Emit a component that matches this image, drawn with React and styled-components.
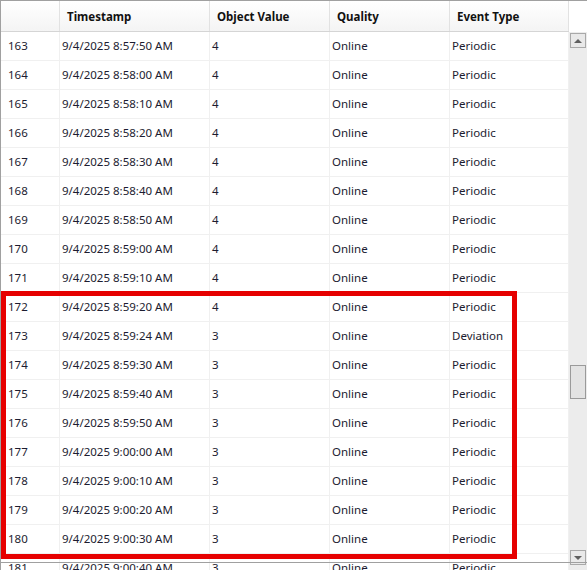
import React from 'react';
import styled, { createGlobalStyle } from 'styled-components';

const GlobalStyle = createGlobalStyle`
  html, body {
    margin: 0;
    padding: 0;
    background: #ffffff;
    overflow: hidden;
  }
  body {
    font-family: "Noto Sans", "Open Sans", Arial, sans-serif;
  }
`;

const rows = [
  [163, '9/4/2025 8:57:50 AM', 4, 'Online', 'Periodic'],
  [164, '9/4/2025 8:58:00 AM', 4, 'Online', 'Periodic'],
  [165, '9/4/2025 8:58:10 AM', 4, 'Online', 'Periodic'],
  [166, '9/4/2025 8:58:20 AM', 4, 'Online', 'Periodic'],
  [167, '9/4/2025 8:58:30 AM', 4, 'Online', 'Periodic'],
  [168, '9/4/2025 8:58:40 AM', 4, 'Online', 'Periodic'],
  [169, '9/4/2025 8:58:50 AM', 4, 'Online', 'Periodic'],
  [170, '9/4/2025 8:59:00 AM', 4, 'Online', 'Periodic'],
  [171, '9/4/2025 8:59:10 AM', 4, 'Online', 'Periodic'],
  [172, '9/4/2025 8:59:20 AM', 4, 'Online', 'Periodic'],
  [173, '9/4/2025 8:59:24 AM', 3, 'Online', 'Deviation'],
  [174, '9/4/2025 8:59:30 AM', 3, 'Online', 'Periodic'],
  [175, '9/4/2025 8:59:40 AM', 3, 'Online', 'Periodic'],
  [176, '9/4/2025 8:59:50 AM', 3, 'Online', 'Periodic'],
  [177, '9/4/2025 9:00:00 AM', 3, 'Online', 'Periodic'],
  [178, '9/4/2025 9:00:10 AM', 3, 'Online', 'Periodic'],
  [179, '9/4/2025 9:00:20 AM', 3, 'Online', 'Periodic'],
  [180, '9/4/2025 9:00:30 AM', 3, 'Online', 'Periodic'],
  [181, '9/4/2025 9:00:40 AM', 3, 'Online', 'Periodic'],
];

const columns = ['', 'Timestamp', 'Object Value', 'Quality', 'Event Type'];

export default function App() {
  return (
    <>
      <GlobalStyle />
      <Frame>
        <Table>
          <HeaderRow>
            {columns.map((c, i) => (
              <HeaderCell key={i}>{c}</HeaderCell>
            ))}
          </HeaderRow>
          {rows.map(r => (
            <Row key={r[0]}>
              {r.map((v, i) => (
                <Cell key={i} first={i === 0}>{v}</Cell>
              ))}
            </Row>
          ))}
        </Table>
        <ScrollBar>
          <ScrollCorner />
          <ScrollTrack>
            <ArrowButton>
              <ArrowUp />
            </ArrowButton>
            <Thumb />
            <ArrowButton down>
              <ArrowDown />
            </ArrowButton>
          </ScrollTrack>
        </ScrollBar>
        <BottomEdge />
        <Highlight />
      </Frame>
    </>
  );
}

// Styles

const Frame = styled.div`
  position: relative;
  display: flex;
  width: 587px;
  height: 570px;
  overflow: hidden;
  border-top: 1px solid #a0a0a0;
  border-left: 1px solid #a0a0a0;
  box-sizing: border-box;
`;

const Table = styled.div`
  width: 568px;
  flex: none;
`;

const HeaderRow = styled.div`
  display: grid;
  grid-template-columns: 59px 150px 120px 120px 119px;
  height: 30px;
  border-bottom: 1px solid #d5d5d5;
  background: linear-gradient(#ffffff, #f4f4f4);
`;

const HeaderCell = styled.div`
  display: flex;
  align-items: center;
  padding-left: 7px;
  padding-top: 1px;
  border-right: 1px solid #e2e2e2;
  font-size: 11.5px;
  font-weight: 700;
  color: #111111;
  white-space: nowrap;
`;

const Row = styled.div`
  display: grid;
  grid-template-columns: 59px 150px 120px 120px 119px;
  height: 28px;
  border-bottom: 1px solid #f0f0f0;
`;

const Cell = styled.div`
  display: flex;
  align-items: center;
  padding-left: ${p => (p.first ? '7px' : '2px')};
  padding-bottom: 2px;
  border-right: 1px solid #f0f0f0;
  font-size: 11.5px;
  color: #1c1c30;
  white-space: nowrap;
`;

const ScrollBar = styled.div`
  width: 18px;
  flex: none;
  display: flex;
  flex-direction: column;
`;

const ScrollCorner = styled.div`
  height: 31px;
  background: #ffffff;
`;

const ScrollTrack = styled.div`
  flex: 1;
  display: flex;
  flex-direction: column;
  align-items: flex-start;
  background: #ececec;
  padding-left: 1px;
`;

const ArrowButton = styled.div`
  width: 16px;
  height: 15px;
  box-sizing: border-box;
  border: 1px solid #a9a9a9;
  background: #e9e9e9;
  display: flex;
  align-items: center;
  justify-content: center;
  margin-top: ${p => (p.down ? '151px' : '1px')};
`;

const ArrowUp = styled.div`
  width: 0;
  height: 0;
  border-left: 4px solid transparent;
  border-right: 4px solid transparent;
  border-bottom: 4px solid #606060;
`;

const ArrowDown = styled.div`
  width: 0;
  height: 0;
  border-left: 4px solid transparent;
  border-right: 4px solid transparent;
  border-top: 4px solid #606060;
`;

const Thumb = styled.div`
  width: 16px;
  height: 34px;
  box-sizing: border-box;
  margin-top: 317px;
  border: 1px solid #9a9a9a;
  background: #e3e3e3;
`;

const BottomEdge = styled.div`
  position: absolute;
  left: 0;
  right: 0;
  top: 561px;
  height: 1px;
  background: #a0a0a0;
`;

const Highlight = styled.div`
  position: absolute;
  left: 0;
  top: 290px;
  width: 516px;
  height: 268px;
  box-sizing: border-box;
  border: 5px solid #e60000;
`;
